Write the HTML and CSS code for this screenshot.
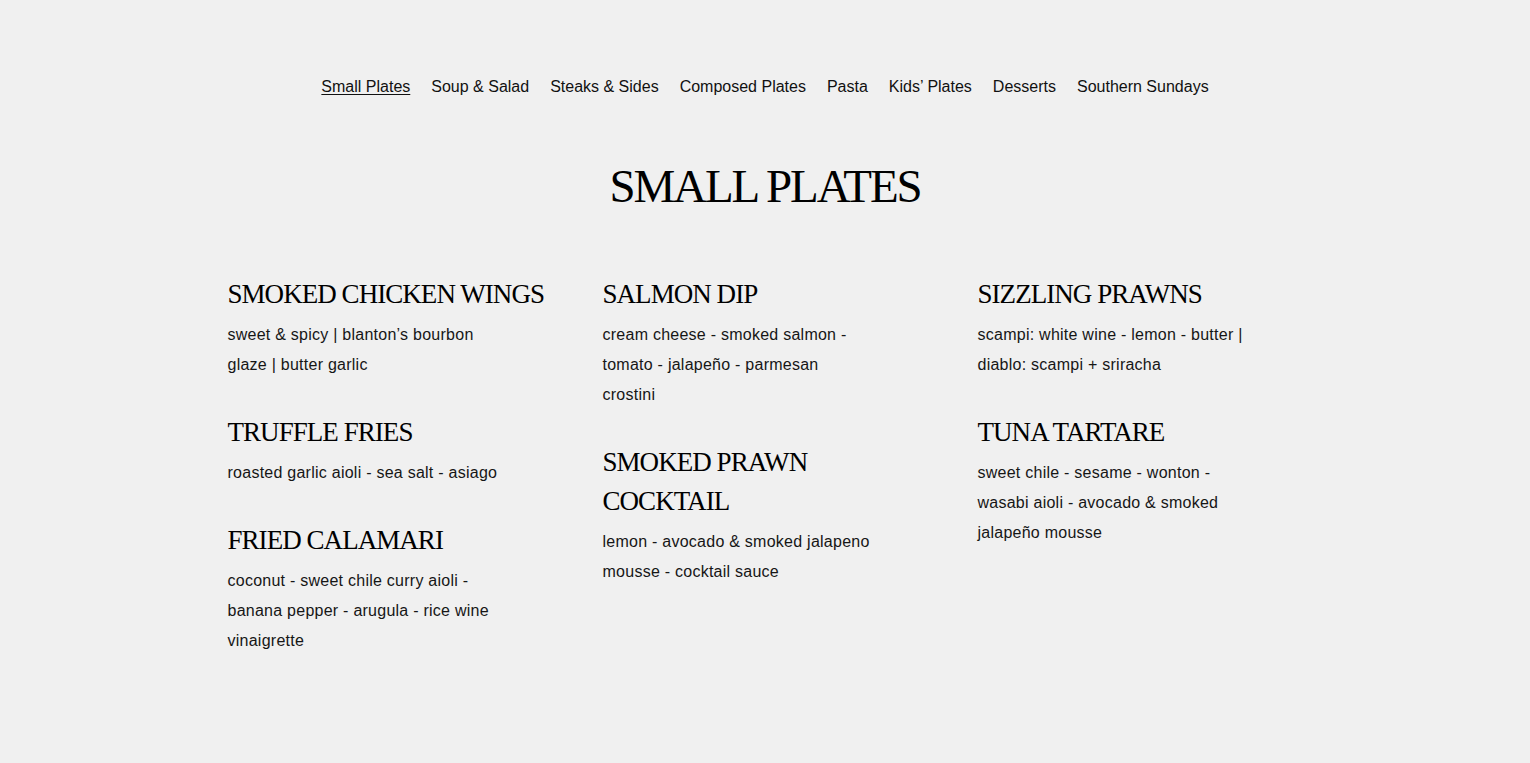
FILE: index.html
```html
<!DOCTYPE html>
<html lang="en">
<head>
<meta charset="utf-8">
<title>Small Plates</title>
<link rel="stylesheet" href="styles.css">
</head>
<body>
<nav class="menu-nav">
  <a class="nav-link active" href="#">Small Plates</a>
  <a class="nav-link" href="#">Soup &amp; Salad</a>
  <a class="nav-link" href="#">Steaks &amp; Sides</a>
  <a class="nav-link" href="#">Composed Plates</a>
  <a class="nav-link" href="#">Pasta</a>
  <a class="nav-link" href="#">Kids’ Plates</a>
  <a class="nav-link" href="#">Desserts</a>
  <a class="nav-link" href="#">Southern Sundays</a>
</nav>
<main class="section">
  <h1 class="section-title">SMALL PLATES</h1>
  <div class="grid">
    <div class="col">
      <div class="item">
        <h2 class="item-name">SMOKED CHICKEN WINGS</h2>
        <p class="item-desc">sweet &amp; spicy | blanton’s bourbon glaze | butter garlic</p>
      </div>
      <div class="item">
        <h2 class="item-name">TRUFFLE FRIES</h2>
        <p class="item-desc">roasted garlic aioli - sea salt - asiago</p>
      </div>
      <div class="item">
        <h2 class="item-name">FRIED CALAMARI</h2>
        <p class="item-desc">coconut - sweet chile curry aioli - banana pepper - arugula - rice wine vinaigrette</p>
      </div>
    </div>
    <div class="col">
      <div class="item">
        <h2 class="item-name">SALMON DIP</h2>
        <p class="item-desc">cream cheese - smoked salmon - tomato - jalapeño - parmesan crostini</p>
      </div>
      <div class="item">
        <h2 class="item-name">SMOKED PRAWN COCKTAIL</h2>
        <p class="item-desc">lemon - avocado &amp; smoked jalapeno mousse - cocktail sauce</p>
      </div>
    </div>
    <div class="col">
      <div class="item">
        <h2 class="item-name">SIZZLING PRAWNS</h2>
        <p class="item-desc">scampi: white wine - lemon - butter | diablo: scampi + sriracha</p>
      </div>
      <div class="item">
        <h2 class="item-name">TUNA TARTARE</h2>
        <p class="item-desc">sweet chile - sesame - wonton - wasabi aioli - avocado &amp; smoked jalapeño mousse</p>
      </div>
    </div>
  </div>
</main>
</body>
</html>
```
FILE: styles.css
```css
html, body {
  margin: 0;
  padding: 0;
}
body {
  background: #f0f0f0;
  color: #111;
  font-family: "Liberation Sans", Arial, sans-serif;
  min-height: 763px;
}
.menu-nav {
  display: flex;
  justify-content: center;
  gap: 21px;
  padding-top: 75px;
}
.nav-link {
  font-size: 16px;
  line-height: 24px;
  letter-spacing: 0;
  color: #111;
  text-decoration: none;
}
.nav-link.active {
  text-decoration: underline;
  text-underline-offset: 2px;
  text-decoration-thickness: 1px;
}
.section {
  width: 1075px;
  margin: 0 auto;
}
.section-title {
  margin: 59px 0 0;
  text-align: center;
  font-family: "Liberation Serif", "Times New Roman", serif;
  font-weight: normal;
  font-size: 47px;
  line-height: 56px;
  letter-spacing: -2.1px;
  color: #000;
}
.grid {
  display: grid;
  grid-template-columns: repeat(3, 326px);
  column-gap: 49px;
  margin-top: 61px;
}
.item {
  margin-bottom: 33px;
}
.item-name {
  margin: 0;
  font-family: "Liberation Serif", "Times New Roman", serif;
  font-weight: normal;
  font-size: 27px;
  line-height: 39px;
  letter-spacing: -0.95px;
  color: #000;
}
.item-desc {
  margin: 6px 0 0;
  max-width: 270px;
  font-size: 16px;
  line-height: 30px;
  letter-spacing: 0.25px;
  color: #161616;
}
```
